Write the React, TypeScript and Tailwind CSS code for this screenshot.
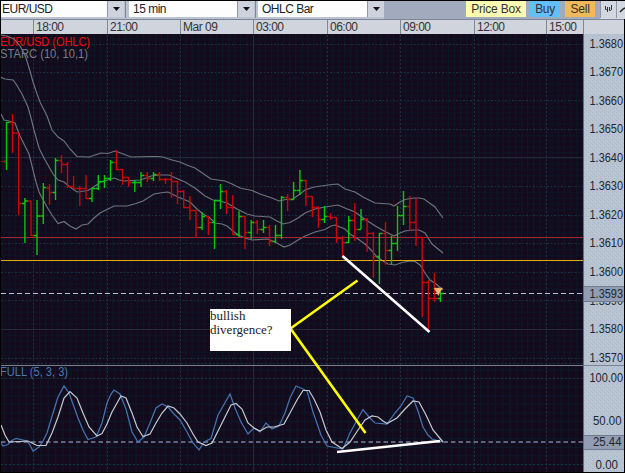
import React from 'react';

type Bar = [x: number, high: number, low: number, open: number, close: number, up: 0 | 1];

const bars: Bar[] = [
  [6.5, 122, 170, 161.5, 122.5, 1],
  [12.5, 114, 153, 122.5, 133, 0],
  [18.6, 133, 215, 133, 203.5, 0],
  [24.9, 198, 243, 203.5, 201, 1],
  [31, 201, 236, 201, 235.5, 0],
  [37, 200, 255, 235.5, 216, 1],
  [43.3, 183, 224, 216, 187.5, 1],
  [49.5, 184, 205, 188, 192.5, 0],
  [55.5, 158, 200, 192.5, 160.5, 1],
  [61.5, 155, 173, 160.5, 164.5, 0],
  [67.5, 162, 188, 164.5, 186.5, 0],
  [73.6, 176, 189, 186.5, 188.5, 0],
  [79.8, 186, 206, 188.5, 188.5, 0],
  [86, 175, 199, 188.5, 198.5, 0],
  [92, 188, 202, 198.5, 188.5, 1],
  [98.3, 175, 190, 188.5, 181.5, 1],
  [104.5, 175, 188, 181.5, 178.5, 1],
  [110.5, 160, 181, 178.5, 162.5, 1],
  [116.5, 150, 170, 162.5, 169.5, 0],
  [122.6, 169, 185, 169.5, 177.5, 0],
  [128.7, 177, 187, 177.5, 182.5, 0],
  [134.8, 180, 192, 182.5, 182.5, 1],
  [141, 172, 187, 182.5, 175.5, 1],
  [147.3, 172, 182, 175.5, 178.5, 0],
  [153.5, 172, 181, 178.5, 174.5, 1],
  [159.5, 172, 181, 174.5, 179.5, 0],
  [165.5, 178, 184, 179.5, 179.5, 0],
  [171.5, 172, 198, 179.5, 181.5, 0],
  [177.5, 181, 204, 181.5, 191.5, 0],
  [183.7, 190, 208, 191.5, 207.5, 0],
  [189.9, 196, 220, 207.5, 210.5, 0],
  [196, 210, 238, 210.5, 227.5, 0],
  [202.1, 212, 230, 227.5, 216.5, 1],
  [208.4, 216, 235, 216.5, 222.5, 0],
  [214.5, 200, 249, 222.5, 200.5, 1],
  [220.5, 184, 209, 200.5, 191.5, 1],
  [226.5, 190, 214, 191.5, 207.5, 0],
  [232.8, 195, 235, 207.5, 234.5, 0],
  [239, 211, 237, 234.5, 216.5, 1],
  [245, 216, 249, 216.5, 232.5, 0],
  [251.2, 220, 239, 232.5, 222.5, 1],
  [257.3, 220, 234, 222.5, 229.5, 0],
  [263.5, 220, 233, 229.5, 227.5, 1],
  [269.5, 225, 246, 227.5, 241.5, 0],
  [275.5, 225, 243, 241.5, 235.5, 1],
  [281.5, 196, 239, 235.5, 197.5, 1],
  [287.6, 194, 211, 197.5, 199.5, 0],
  [293.6, 182, 200, 199.5, 190.5, 1],
  [299.9, 170, 195, 190.5, 180.5, 1],
  [305.9, 180, 206, 180.5, 196.5, 0],
  [312.3, 196, 217, 196.5, 207.5, 0],
  [318.4, 206, 228, 207.5, 219.5, 0],
  [324.5, 206, 223, 219.5, 216.5, 1],
  [330.5, 213, 220, 216.5, 217.5, 0],
  [336.5, 217, 243, 217.5, 238.5, 0],
  [342.5, 236, 256, 238.5, 242.5, 0],
  [348.7, 216, 243, 242.5, 220.5, 1],
  [354.8, 203, 241, 220.5, 229.5, 0],
  [361, 209, 229, 229.5, 219.5, 1],
  [367.1, 218, 252, 219.5, 233.5, 0],
  [373.4, 232, 278, 233.5, 256.5, 0],
  [379.4, 233, 284, 256.5, 233.5, 1],
  [385.5, 222, 265, 233.5, 250.5, 0],
  [391.5, 236, 264, 250.5, 243.5, 1],
  [397.5, 206, 251, 243.5, 215.5, 1],
  [403.5, 191, 225, 215.5, 206.5, 1],
  [409.8, 196, 231, 206.5, 222.5, 0],
  [416, 198, 246, 222.5, 237.5, 0],
  [422.2, 237, 317, 237.5, 282.5, 0],
  [428.4, 280, 330, 282.5, 298.5, 0],
  [434.5, 273, 302, 298.5, 298.5, 0],
  [440.5, 292, 302, 298.5, 293.5, 1],
];

const bands = [
  '0,35 7,36 14,39 20,46 24,53 27,61 30,71 33,82 36,91 40,102 44,110 47,116 52,130 58,137 64,141 70,149 77,156.5 89,157 95,155 101,153 108,153.5 115,151 122,153.5 131,157 150,156.5 158,156.5 163,157 172,160 180,162 188,165.5 195,168 203,173.5 211,179 225,181 232,184 240,188 252,190.5 260,194 272,198 279,201 286,199.5 293,199 300,194 305,190 314,187 325,185.5 332,184.5 338,184 345,189 355,192 363,197 375,203 390,204 394,206 400,202 405,199.5 414,198 419,198 424,199 435,207 443,218',
  '0,77 5,79 13,80 16,84 22,94 28,107 31,118 34,130 39,148 44,158 53,174 58,180 64,182 70,187 77,192 88,190.5 95,186 101,182 108,180 114,178 119,180 124,181 140,180 146,178 151,176 160,175 169,175 178,179 185,182 195,188 205,196 213,200 220,201 227,203 237,209 247,214 255,216 270,217 277,221 283,224 290,222.5 298,218 305,213 315,209 325,207 338,205 345,208 355,212 366,220 377,227 386,232 394,236 400,233 405,231 413,230 419,230 425,233 432,244 443,253',
  '1,114 4,120 9,121 15,123 20,136 25,146 29,154 33,170 36,182 39,192 47,207 52,215 58,223.5 64,221.5 70,226 76,229 82,225 88,224 94,218 100,213 108,209 114,206 127,206 136,203.5 143,201 154,194 163,192.5 168,192 178,197 190,202 197,209 203,214 210,218 215,223 222,224 227,226 233,231 238,235 245,238 252,240 268,239 275,242 284,247 290,245 298,240 305,236 315,232 325,229.5 331,226 335,225 340,227 345,229 350,234 358,239 365,244 372,251 377,257 383,261 388,264 395,265 402,262.5 410,261 415,261.5 420,265 425,273 430,280 436,284 443,290',
];

const fastLine =
  '1,443 3,446 8,444.5 11,441 16,438.5 27,441 30,445 33,451 39,447 43,441 47,433 53,413 58,397 64,386 69,393 78,418 83,430 88,439.5 96,437 102,423 107,403 111,394 114,390 120,394 126,409 132,432 138,442 144,437 150,423 156,408 162,404 168,407 174,414 180,420 187,432 193,443 199,450 204,442 211,438.5 218,415 230,394 235,408 241,422 248,434 254,428 260,432 266,423 272,429 279,426 285,413 290,398 296,386 303,389 307,391 313,412 321,435 327,446 343,449 350,433 357,420 363,409.5 369,417 375,423 387,424 395,413 401,406 407,396 413,398 418,411 423,427 428,435 432,439 443,442';

const slowLine =
  '1,425 5,435 9,442 20,441.5 28,441 37,445.5 46,445.5 52,433 58,417 64,398 70,391.5 77,398 83,413 89,427 97,436 102,433.5 107,424 112,412 121,396 126,398 132,413 137,427 143,436.5 150,434 156,423 162,413 168,406 174,408 180,414 187,423 193,434 198,442 206,445.5 212,443 222,423 231,405 236,403.5 242,409 248,423 254,428 260,431 267,427 274,427 284,424 290,413 297,400 303,390.5 309,390.5 314,399 320,412 326,430 332,442 342,448.5 350,442 358,430 365,420 372,416 378,417 383,421 387,423.5 397,418 405,409 413,401 419,402 426,415 433,430 443,442';

const hours = [
  { label: '', width: 'w-[32px]' },
  { label: '18:00', width: 'w-[74px]' },
  { label: '21:00', width: 'w-[73px]' },
  { label: 'Mar 09', width: 'w-[73px]' },
  { label: '03:00', width: 'w-[74px]' },
  { label: '06:00', width: 'w-[73px]' },
  { label: '09:00', width: 'w-[74px]' },
  { label: '12:00', width: 'w-[72px]' },
  { label: '15:00', width: 'w-[37px]' },
  { label: '', width: 'w-[41px]' },
];

const hourLines = [33.5, 107.5, 180.5, 253.5, 327.5, 400.5, 474.5, 546.5];
const priceLines = [44.5, 72.5, 100.5, 129.5, 157.5, 186.5, 215.5, 243.5, 272.5, 300.5, 329.5, 358.5];

const prices = [
  { y: 48, label: '1.3680' },
  { y: 76, label: '1.3670' },
  { y: 105, label: '1.3660' },
  { y: 133, label: '1.3650' },
  { y: 161.5, label: '1.3640' },
  { y: 190, label: '1.3630' },
  { y: 218.5, label: '1.3620' },
  { y: 247, label: '1.3610' },
  { y: 275.5, label: '1.3600' },
  { y: 304.5, label: '1.3590' },
  { y: 333, label: '1.3580' },
  { y: 361.5, label: '1.3570' },
];

const Select = ({ label, className }: { label: string; className: string }) => (
  <div className={`flex h-[16px] bg-[#fdfdfd] ${className}`}>
    <span className="flex-1 whitespace-nowrap pl-1 text-[12px] leading-[16px] tracking-[-0.5px] text-[#222]">
      {label}
    </span>
    <span className="flex w-[17px] items-center justify-center border-l border-[#8f97a8] bg-[#cdd2dc]">
      <svg width="7" height="4" viewBox="0 0 7 4">
        <path d="M0 0h7L3.5 4z" fill="#111" />
      </svg>
    </span>
  </div>
);

const Toolbar = () => (
  <div className="flex h-[18px] bg-[#a2abbd]">
    <div className="flex bg-[#bcc3d0]">
      <Select label="EUR/USD" className="w-[123px] -indent-[3px]" />
      <div className="mx-px h-[17px] w-px bg-[#7d8698]" />
      <Select label="15 min" className="ml-[2px] w-[125px]" />
      <div className="mx-px h-[17px] w-px bg-[#7d8698]" />
      <Select label="OHLC Bar" className="ml-px w-[126px]" />
    </div>
    <div className="ml-[82px] flex gap-[4px] text-center text-[12px] leading-[17px] text-[#333]">
      <span className="h-[16px] w-[60px] whitespace-nowrap bg-[#fdfbb0] tracking-[-0.2px]">Price Box</span>
      <span className="h-[16px] w-[30px] bg-[#63bff9] tracking-[-0.4px]">Buy</span>
      <span className="ml-px h-[16px] w-[30px] bg-[#efb95c] tracking-[-0.2px]">Sell</span>
    </div>
    <div className="ml-[5px] flex bg-[#d3d7df]">
      <svg width="25" height="17" viewBox="0 0 25 17" fill="none">
        <path d="M.5 0v17M16.5 0v17" stroke="#8f97a8" />
        <path d="M5.5 5v4M7.5 6v5M9.5 6v4M11.5 4v5" stroke="#333" />
        <path d="M5 8.5h2M9 9.5h2" stroke="#555" />
        <path d="M20 11l3-3 2-1" stroke="#222" strokeWidth="1.5" />
      </svg>
    </div>
  </div>
);

const TimeAxis = () => (
  <div className="flex h-[15px] border-t border-[#7d8698] bg-[#cfd4dd] text-[12px] leading-[15px] tracking-[-0.5px] text-[#333]">
    {hours.map((hour, i) => (
      <div
        key={i}
        className={`shrink-0 whitespace-nowrap pl-[2px] ${hour.width} ${i > 0 ? 'border-l border-[#7f8899]' : ''}`}
      >
        {hour.label}
      </div>
    ))}
  </div>
);

const Plot = () => (
  <svg width="582" height="438" viewBox="1 34 582 438" fill="none" className="block shrink-0">
    <defs>
      <pattern id="fine" x="33" y="44" width="6.1" height="5.7" patternUnits="userSpaceOnUse">
        <path d="M0 .5h6.1" stroke="#07192a" strokeDasharray="2 1" />
        <path d="M.5 0v5.7" stroke="#07192a" />
      </pattern>
      <pattern id="coarse" x="33" y="378" width="7.33" height="8.6" patternUnits="userSpaceOnUse">
        <path d="M0 .5h7.33M.5 0v8.6" stroke="#08192a" />
      </pattern>
    </defs>

    <rect x="1" y="34" width="582" height="438" fill="#150a1b" />
    <rect x="1" y="34" width="582" height="331" fill="url(#fine)" />
    <rect x="1" y="366" width="582" height="106" fill="url(#coarse)" />

    <g stroke="#1a303f" strokeDasharray="2 2">
      {hourLines.map((x) => (
        <path key={x} d={`M${x} 35V472`} />
      ))}
      {priceLines.map((y) => (
        <path key={y} d={`M1 ${y}H583`} strokeDasharray="2 2 1 2" />
      ))}
      <path d="M1 378.5H583M1 464.5H583M1 363.5H583" />
    </g>
    <path d="M253.5 35V472M1 157.5H583M1 329.5H583" stroke="#262a38" />
    <path d="M1 365.5H583" stroke="#7c808c" />

    <g fontFamily="Liberation Sans, Arial, sans-serif" fontSize="12">
      <text x="0" y="46" fill="#ee0808" textLength="90" lengthAdjust="spacingAndGlyphs">EUR/USD (OHLC)</text>
      <text x="0" y="58" fill="#7b7d84" textLength="88" lengthAdjust="spacingAndGlyphs">STARC (10, 10,1)</text>
      <text x="0" y="376" fill="#4a78b8" textLength="68" lengthAdjust="spacingAndGlyphs">FULL (5, 3, 3)</text>
    </g>

    {bands.map((points, i) => (
      <polyline key={i} points={points} stroke="#6c757d" strokeWidth="1.15" />
    ))}

    <path d="M1 237.5H583" stroke="#a82632" strokeWidth="1.1" />
    <path d="M1 260.5H583" stroke="#e8a90a" strokeWidth="1.1" />
    <path d="M1 293.5H583" stroke="#b9bfd0" strokeDasharray="5 3" />

    {bars.map(([x, high, low, open, close, up]) => (
      <path
        key={x}
        d={`M${x} ${high}V${low}M${x - 3} ${open}H${x}M${x} ${close}H${x + 3}`}
        stroke={up ? '#08c80c' : '#cc0509'}
        strokeWidth="1.4"
      />
    ))}
    <path d="M1 161.5h5" stroke="#a00810" />

    <path d="M434 288h8.5l-4.2 7.5z" fill="#f0bd70" stroke="#d8a050" strokeWidth=".5" />

    <path d="M1 442H583" stroke="#75839f" strokeWidth="1.5" strokeDasharray="4.5 3" />
    <polyline points={fastLine} stroke="#4673b0" strokeWidth="1.25" />
    <polyline points={slowLine} stroke="#c6cbd2" strokeWidth="1.2" />

    <g strokeWidth="2.6">
      <path d="M342.5 256L429.5 332" stroke="#fff" />
      <path d="M337 452L440 441" stroke="#fff" />
      <path d="M357.5 280.5L290.5 328.5L365.5 433" stroke="#ffff00" />
    </g>
  </svg>
);

const PriceAxis = () => (
  <svg width="41" height="438" viewBox="583 34 41 438" className="block shrink-0">
    <defs>
      <pattern id="grain" width="4" height="4" patternUnits="userSpaceOnUse">
        <path d="M0 0h1v1h-1zM2 2h1v1h-1z" fill="#a9b7d0" />
        <path d="M3 1h1v1h-1z" fill="#cbc9c2" />
      </pattern>
    </defs>
    <rect x="583" y="34" width="41" height="438" fill="#b8c3d1" />
    <rect x="583" y="34" width="41" height="438" fill="url(#grain)" />
    <g fontFamily="Liberation Sans, Arial, sans-serif" fontSize="12" fill="#24262c">
      {prices.map((price) => (
        <text key={price.label} x="589.5" y={price.y} textLength="33.5" lengthAdjust="spacingAndGlyphs">
          {price.label}
        </text>
      ))}
      <rect x="583" y="286" width="41" height="16" fill="#929db4" />
      <path d="M583 286.5h41M583 301.5h41" stroke="#717b90" />
      <text x="589.5" y="298" textLength="33.5" lengthAdjust="spacingAndGlyphs">1.3593</text>
      <path d="M583 365.5h41" stroke="#7d8698" />
      <text x="589.5" y="382" textLength="33.5" lengthAdjust="spacingAndGlyphs">100.00</text>
      <text x="593" y="425" textLength="28.5" lengthAdjust="spacingAndGlyphs">50.00</text>
      <rect x="583" y="435" width="41" height="15" fill="#929db4" />
      <path d="M583 435.5h41M583 449.5h41" stroke="#717b90" />
      <text x="593" y="446" textLength="28.5" lengthAdjust="spacingAndGlyphs">25.44</text>
      <text x="595.5" y="469" textLength="22.5" lengthAdjust="spacingAndGlyphs">0.00</text>
    </g>
    <path d="M583.5 34v438" stroke="#626b80" />
  </svg>
);

export default function App() {
  return (
    <div className="h-[473px] w-[625px] overflow-hidden bg-black p-px font-['Liberation_Sans',Arial,sans-serif]">
      <Toolbar />
      <TimeAxis />
      <div className="relative flex">
        <Plot />
        <PriceAxis />
        <div className="absolute left-[209px] top-[275px] h-[42px] w-[81px] bg-white font-['Liberation_Serif',serif] text-[13px] leading-[14px] text-[#222]">
          bullish
          <br />
          divergence?
        </div>
      </div>
    </div>
  );
}
